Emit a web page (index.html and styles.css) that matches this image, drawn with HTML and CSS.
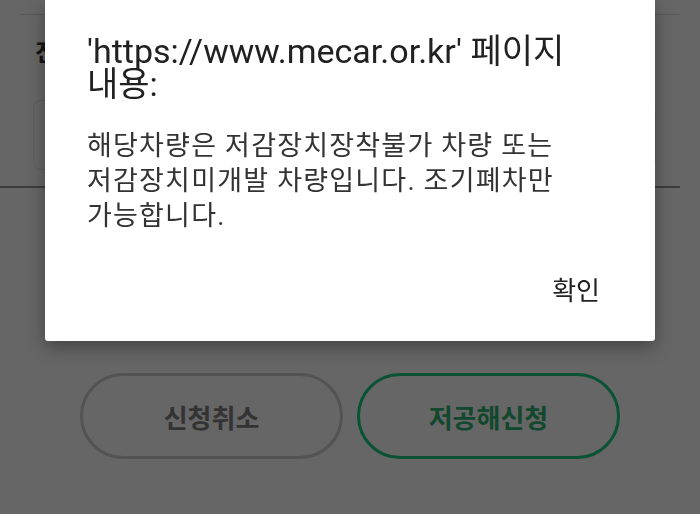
FILE: index.html
```html
<!DOCTYPE html>
<html lang="ko">

<head>
    <meta charset="UTF-8">
    <meta name="viewport" content="width=device-width, initial-scale=1.0">
    <title>저공해신청</title>
    <link rel="stylesheet" href="styles.css">
</head>

<body>
    <div id="trang">
        <div class="duong-ke"></div>
        <div class="nhan">진단차량</div>
        <div class="o-nhap"></div>
        <div class="duong-ke dam"></div>
        <div class="nut-nhom">
            <button class="nut nut-huy">신청취소</button>
            <button class="nut nut-xanh">저공해신청</button>
        </div>
    </div>

    <div id="hop-thoai">
        <div class="tieu-de">'https://www.mecar.or.kr' 페이지 내용:</div>
        <div class="noi-dung">해당차량은 저감장치장착불가 차량 또는 저감장치미개발 차량입니다. 조기폐차만 가능합니다.</div>
        <div class="hanh-dong">
            <button class="xac-nhan">확인</button>
        </div>
    </div>
</body>

</html>
```

FILE: styles.css
```css
* {
    box-sizing: border-box;
    padding: 0;
    margin: 0;
}

body {
    background-color: #666;
    font-family: Roboto, "Noto Sans CJK KR", sans-serif;
    overflow: hidden;
}

#trang {
    padding: 14px 20px 0 20px;
}

.duong-ke {
    height: 1px;
    background-color: #595959;
}

.duong-ke.dam {
    height: 2px;
    margin-top: 16px;
    margin-left: -20px;
    background-color: #3c3c3c;
}

.nhan {
    margin-top: 26px;
    margin-left: 15px;
    font-size: 24px;
    line-height: 24px;
    font-weight: bold;
    color: #141414;
}

.o-nhap {
    margin-top: 35px;
    margin-left: 13px;
    margin-right: 24px;
    height: 70px;
    border: 1px solid #5e5e5e;
    border-radius: 8px;
}

.nut-nhom {
    display: flex;
    justify-content: center;
    gap: 14px;
    margin-top: 185px;
}

.nut {
    width: 263px;
    height: 86px;
    border-radius: 43px;
    background: none;
    font-family: Roboto, "Noto Sans CJK KR", sans-serif;
    font-size: 26px;
    font-weight: bold;
}

.nut-huy {
    border: 3px solid #535353;
    color: #333;
}

.nut-xanh {
    border: 3px solid #0a5234;
    color: #12482d;
}

/* hộp thoại nằm đè lên trang */
#hop-thoai {
    position: fixed;
    top: 0;
    left: 45px;
    width: 610px;
    height: 341px;
    padding: 35px 42px 0 42px;
    background-color: #fff;
    border-radius: 0 0 3px 3px;
    box-shadow: 0 6px 18px rgba(0, 0, 0, 0.35);
    word-break: keep-all;
}

.tieu-de {
    font-size: 34px;
    line-height: 33px;
    color: #212121;
}

.noi-dung {
    margin-top: 28px;
    font-size: 27px;
    line-height: 35px;
    letter-spacing: 1.2px;
    color: #333;
}

.hanh-dong {
    display: flex;
    justify-content: flex-end;
    margin-top: 42px;
    padding-right: 13px;
}

.xac-nhan {
    border: none;
    background: none;
    font-family: Roboto, "Noto Sans CJK KR", sans-serif;
    font-size: 26px;
    line-height: 30px;
    color: #222;
}
```
